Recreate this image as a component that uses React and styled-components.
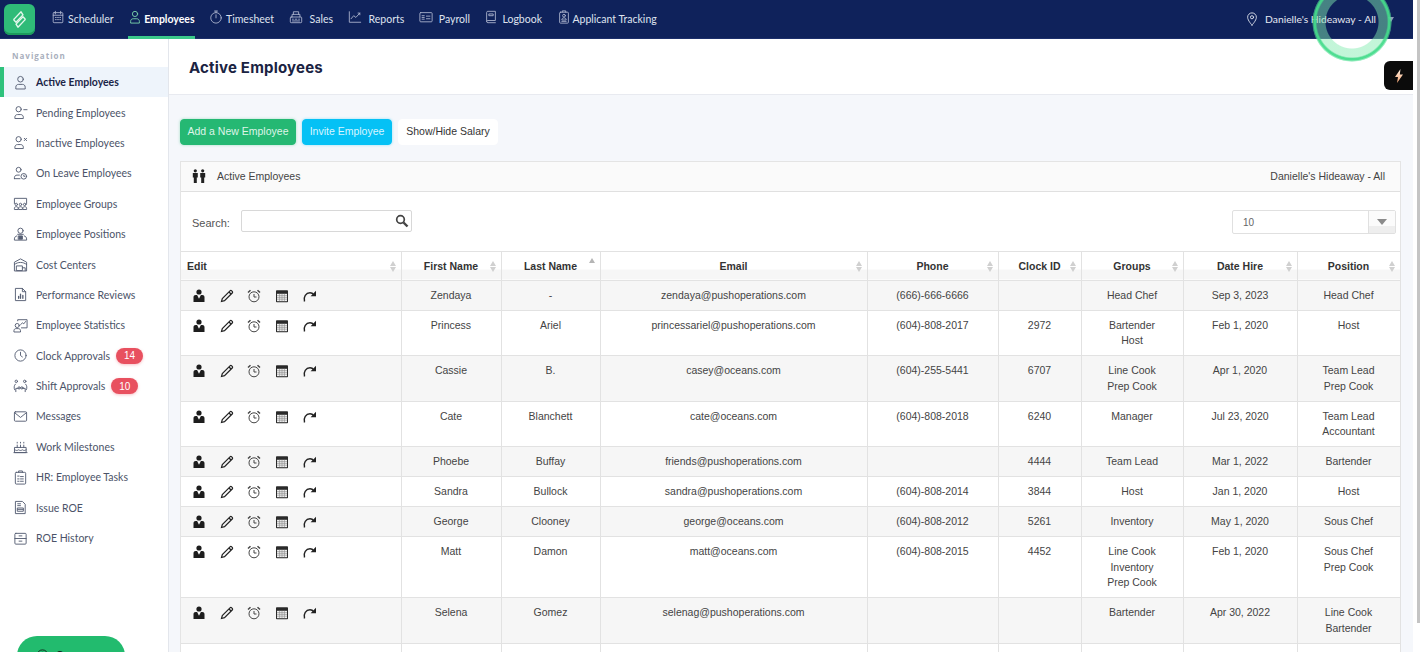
import React from "react";
import styled, { createGlobalStyle } from "styled-components";

const GlobalStyle = createGlobalStyle`
  html, body {
    margin: 0;
    height: 100%;
    overflow: hidden;
    background: #fff;
  }
  * { box-sizing: border-box; }
`;

const Page = styled.div`
  width: 1420px;
  height: 652px;
  display: flex;
  overflow: hidden;
  position: relative;
  font-family: "Liberation Sans", Arial, sans-serif;
`;

const Viewport = styled.div`
  width: 1413px;
  height: 652px;
  display: flex;
  flex-direction: column;
`;

const ScrollTrack = styled.div`
  width: 7px;
  background: #fff;
  padding-left: 4px;
`;

const ScrollThumb = styled.div`
  height: 623px;
  background: #c4c4c4;
`;

const TopBar = styled.header`
  height: 39px;
  flex: none;
  background: #0f225b;
  display: flex;
  align-items: center;
  padding-left: 4px;
  border-bottom: 1px solid #1c2f6b;
`;

const Logo = styled.div`
  width: 31px;
  height: 31px;
  border-radius: 6px;
  background: #2fbb78;
  box-shadow: inset 0 -2px 0 #1c9a5c;
  display: flex;
  align-items: center;
  justify-content: center;
  margin-right: 16px;
`;

const TopNav = styled.nav`
  display: flex;
  align-items: stretch;
  height: 39px;
  gap: 14.5px;
`;

const TopItem = styled.a`
  display: flex;
  align-items: center;
  gap: ${(p) => p.$gap}px;
  height: 39px;
  padding-top: 3px;
  font-family: Lato, sans-serif;
  font-size: 10.5px;
  font-weight: ${(p) => (p.$active ? 700 : 400)};
  color: ${(p) => (p.$active ? "#fff" : "#dfe3ef")};
  border-bottom: 3px solid ${(p) => (p.$active ? "#3bc98a" : "transparent")};
  svg {
    color: ${(p) => (p.$active ? "#7edcae" : "#aeb6cf")};
    margin-top: -4px;
  }
`;

const Location = styled.div`
  margin-left: auto;
  display: flex;
  align-items: center;
  gap: 6px;
  font-family: Lato, sans-serif;
  font-size: 10.3px;
  color: #e6e9f2;
  padding-right: 19px;
`;

const Caret = styled.span`
  width: 0;
  height: 0;
  margin-left: 6px;
  border-left: 3.5px solid transparent;
  border-right: 3.5px solid transparent;
  border-top: 5px solid #8d99bb;
`;

const Ring = styled.div`
  position: absolute;
  left: 1312px;
  top: -18px;
  width: 80px;
  height: 80px;
  border-radius: 50%;
  pointer-events: none;
  background: radial-gradient(
    circle closest-side,
    transparent 0 26px,
    rgba(130, 235, 175, 0.48) 27px 35px,
    rgba(70, 220, 140, 0.95) 36.5px 38px,
    rgba(90, 225, 155, 0.4) 39.5px,
    transparent 40px
  );
`;

const BoltTab = styled.div`
  position: absolute;
  left: 1384px;
  top: 61px;
  width: 29px;
  height: 29px;
  background: #0b0b0b;
  border-radius: 6px 0 0 6px;
  display: flex;
  align-items: center;
  justify-content: center;
`;

const SupportButton = styled.div`
  position: absolute;
  left: 17px;
  top: 636px;
  width: 108px;
  height: 40px;
  border-radius: 20px;
  background: #22bb6e;
  color: #10281c;
  display: flex;
  align-items: flex-start;
  gap: 6px;
  padding: 12px 0 0 18px;
  font-family: Lato, sans-serif;
  font-size: 13px;
  font-weight: 700;
`;

const Body = styled.div`
  flex: 1;
  min-height: 0;
  display: flex;
`;

const Sidebar = styled.aside`
  width: 169px;
  flex: none;
  background: #fff;
  border-right: 1px solid #e3e6ec;
  padding-top: 11px;
`;

const SideLabel = styled.div`
  height: 17px;
  padding-left: 12px;
  font-family: "Open Sans", sans-serif;
  font-size: 8px;
  font-weight: 700;
  letter-spacing: 1px;
  color: #a9afbd;
`;

const SideItem = styled.a`
  height: 30.4px;
  display: flex;
  align-items: center;
  padding-left: 12px;
  font-family: Lato, sans-serif;
  font-size: 10.5px;
  font-weight: ${(p) => (p.$active ? 700 : 400)};
  color: ${(p) => (p.$active ? "#1b2547" : "#4b5368")};
  background: ${(p) => (p.$active ? "#eef4fb" : "transparent")};
  box-shadow: ${(p) => (p.$active ? "inset 4px 0 0 #2fc27c" : "none")};
`;

const SideIcon = styled.span`
  width: 16px;
  margin-right: 8px;
  display: flex;
  justify-content: center;
  color: #555e73;
`;

const Badge = styled.span`
  margin-left: 6px;
  height: 16px;
  width: 27px;
  border-radius: 8px;
  background: #e8505f;
  color: #fff;
  font-family: "Liberation Sans", Arial, sans-serif;
  font-size: 10px;
  font-weight: 400;
  display: flex;
  align-items: center;
  justify-content: center;
  box-shadow: 0 1px 3px rgba(232, 80, 95, 0.35);
`;

const Main = styled.main`
  flex: 1;
  min-width: 0;
  background: #f5f7fb;
`;

const PageHead = styled.div`
  height: 56px;
  background: #fff;
  border-bottom: 1px solid #e8eaf0;
  display: flex;
  align-items: center;
  padding: 2px 0 0 20px;
  font-family: Inter, sans-serif;
  font-size: 15px;
  font-weight: 700;
  color: #1a2342;
  letter-spacing: 0.2px;
`;

const Content = styled.div`
  padding: 24px 12px 0 11px;
`;

const Actions = styled.div`
  display: flex;
  gap: 6px;
  margin-bottom: 16px;
`;

const ActionButton = styled.button`
  height: 26px;
  width: ${(p) => p.$w}px;
  border: 1px solid ${(p) => p.$bg};
  border-radius: 4px;
  background: ${(p) => p.$bg};
  color: ${(p) => p.$fg};
  font-family: "Liberation Sans", Arial, sans-serif;
  font-size: 10.5px;
  padding: 0 0 2px;
  box-shadow: ${(p) => p.$glow};
`;

const Panel = styled.section`
  background: #fff;
  border: 1px solid #e4e4e4;
`;

const PanelHead = styled.div`
  height: 30px;
  display: flex;
  align-items: center;
  justify-content: space-between;
  padding: 0 15px 2px 11px;
  font-size: 10.5px;
  color: #444;
  border-bottom: 1px solid #e0e0e0;
  background-color: #fafafa;
  background-image: radial-gradient(#e9e9e9 0.6px, transparent 0.7px);
  background-size: 4px 4px;
`;

const PanelTitle = styled.div`
  display: flex;
  align-items: center;
  gap: 11px;
`;

const FilterRow = styled.div`
  height: 58.5px;
  display: flex;
  align-items: center;
  justify-content: space-between;
  padding: 0 4px 0 11px;
  font-size: 11px;
  color: #555;
`;

const SearchLabel = styled.label`
  display: flex;
  align-items: center;
  gap: 11px;
  margin-top: -1px;
  span {
    padding-top: 4px;
  }
`;

const SearchBox = styled.div`
  width: 171px;
  height: 22px;
  border: 1px solid #d8d8d8;
  border-radius: 2px;
  display: flex;
  align-items: center;
  justify-content: flex-end;
  padding-right: 2px;
`;

const PageSize = styled.div`
  width: 164px;
  height: 24px;
  border: 1px solid #e0e0e0;
  border-radius: 2px;
  display: flex;
  font-size: 10px;
  color: #666;
  margin-top: 2px;
`;

const PageSizeValue = styled.div`
  flex: 1;
  display: flex;
  align-items: center;
  padding-left: 10px;
`;

const PageSizeArrow = styled.div`
  width: 27px;
  border-left: 1px solid #e0e0e0;
  background: linear-gradient(#fbfbfb 70%, #eee 70%);
  display: flex;
  align-items: center;
  justify-content: center;
  &::after {
    content: "";
    border-left: 5px solid transparent;
    border-right: 5px solid transparent;
    border-top: 6px solid #8a8a8a;
  }
`;

const Table = styled.table`
  width: 1219px;
  table-layout: fixed;
  border-collapse: collapse;
  font-size: 10.5px;
  color: #444;
`;

const Th = styled.th`
  height: 29px;
  position: relative;
  padding: 0 4px;
  border: 1px solid #e2e2e2;
  font-weight: 700;
  color: #333;
  text-align: ${(p) => (p.$left ? "left" : "center")};
  padding-left: ${(p) => (p.$left ? "6px" : "4px")};
  background: linear-gradient(#fff 64%, #f6f6f6 64%);
  &:first-child {
    border-left: none;
  }
`;

const SortMark = styled.span`
  position: absolute;
  right: 5px;
  top: 9px;
  display: flex;
  flex-direction: column;
  gap: 1px;
  &::before {
    content: "";
    border-left: 3px solid transparent;
    border-right: 3px solid transparent;
    border-bottom: 5px solid ${(p) => (p.$asc ? "#b5b5b5" : "#d0d0d0")};
    margin-top: ${(p) => (p.$asc ? "-3px" : "0")};
  }
  &::after {
    content: "";
    border-left: 3px solid transparent;
    border-right: 3px solid transparent;
    border-top: 5px solid ${(p) => (p.$asc ? "transparent" : "#d0d0d0")};
  }
`;

const Tr = styled.tr`
  background: ${(p) => (p.$odd ? "#f6f6f6" : "#fff")};
`;

const Td = styled.td`
  padding: 7px 4px 6.5px;
  border: 1px solid #e2e2e2;
  text-align: center;
  vertical-align: top;
  line-height: 15.5px;
  &:first-child {
    border-left: none;
  }
`;

const EditCell = styled(Td)`
  padding: 7px 0 0 11px;
`;

const EditIcons = styled.div`
  display: flex;
  gap: 13.5px;
  height: 16px;
  align-items: center;
  color: #222;
`;

const Line = styled.div``;

// line icon shorthand, 16 unit box, stroke follows the text colour
const Glyph = ({ children, size = 15 }) => (
  <svg
    width={size}
    height={size}
    viewBox="0 0 16 16"
    fill="none"
    stroke="currentColor"
    strokeWidth="1"
    strokeLinecap="round"
    strokeLinejoin="round"
  >
    {children}
  </svg>
);

const personBody = "M2 14v-1c0-1.600 1.200-2.800 2.800-2.800h3.400c1.600 0 2.800 1.200 2.800 2.800v1z";

const icons = {
  scheduler: (
    <>
      <rect x="2.500" y="3" width="11" height="11.500" rx="1" />
      <path d="M5 1.500v3M11 1.500v3M2.500 6h11M5 8.500h1M7.500 8.500h1M10 8.500h1M5 11h1M7.500 11h1M10 11h1" />
    </>
  ),
  person: (
    <>
      <circle cx="8" cy="4.500" r="3" />
      <path d="M3 14.500v-1.500c0-1.800 1.200-3 3-3h4c1.800 0 3 1.200 3 3v1.500z" />
    </>
  ),
  stopwatch: (
    <>
      <circle cx="8" cy="9" r="6" />
      <path d="M8 3V1.200M6.300 1.200h3.400M8 5.500V9" />
    </>
  ),
  register: (
    <>
      <rect x="1.500" y="8" width="13" height="6.500" rx="1" />
      <path d="M3.500 8V5h9v3M5 5V2h6v3M4 10.500h1M7 10.500h2M11 10.500h1M4 12.500h8" />
    </>
  ),
  chart: (
    <>
      <path d="M1.500 2v12h13" />
      <path d="M3.500 10l3-3.500 2.500 2 4.500-5" />
      <path d="M11.500 3.500h2v2" />
    </>
  ),
  payroll: (
    <>
      <rect x="1" y="3" width="14" height="10.500" rx="1" />
      <path d="M3.500 6.500h2.500M3.500 8.500h2.500M3.500 10.500h2.500M8.500 7h4M8.500 10h4" />
    </>
  ),
  book: (
    <>
      <path d="M3 13V2.800c0-.7.500-1.300 1.300-1.300H13v10.500H4.500C3.700 12 3 12.500 3 13.300s.7 1.200 1.500 1.200H13" />
      <path d="M6 4.500h4.500v2H6z" />
    </>
  ),
  clipboardPerson: (
    <>
      <rect x="3" y="2.500" width="10" height="12.500" rx="1" />
      <path d="M6 2.500V1h4v1.500" />
      <circle cx="8" cy="6.500" r="1.600" />
      <path d="M5.500 11c0-1.300 1-2 2.500-2s2.500.7 2.500 2zM5.500 13h5" />
    </>
  ),
  pin: (
    <>
      <path d="M8 15S3 9.800 3 6a5 5 0 0 1 10 0c0 3.800-5 9-5 9z" />
      <circle cx="8" cy="6" r="1.800" />
    </>
  ),
  minus: (
    <>
      <circle cx="6" cy="4.500" r="2.800" />
      <path d={personBody} />
      <path d="M11.500 5h3.500" />
    </>
  ),
  cross: (
    <>
      <circle cx="6" cy="4.500" r="2.800" />
      <path d={personBody} />
      <path d="M12 3.500l2.500 2.500M14.500 3.500L12 6" />
    </>
  ),
  leave: (
    <>
      <circle cx="6" cy="4" r="2.600" />
      <path d="M1.500 13.500v-1c0-1.600 1.200-2.800 2.800-2.800h2.500" />
      <path d="M1.500 13.500h6" />
      <circle cx="11.500" cy="11" r="3" />
      <path d="M11.500 9.800V11h1.200" />
    </>
  ),
  groups: (
    <>
      <path d="M1.500 8V2.500h13V8" />
      <circle cx="3.500" cy="9" r="1.300" />
      <circle cx="8" cy="9" r="1.300" />
      <circle cx="12.500" cy="9" r="1.300" />
      <path d="M1.500 14v-1c0-1 .8-1.600 2-1.600s2 .6 2 1.600v1zM6 14v-1c0-1 .8-1.600 2-1.600s2 .6 2 1.600v1zM10.500 14v-1c0-1 .8-1.600 2-1.600s2 .6 2 1.600v1z" />
    </>
  ),
  positions: (
    <>
      <circle cx="8" cy="4" r="2.800" />
      <path d="M5 7.800h6M4 9.500c-1.500.4-2.500 1.500-2.500 3.200V14h13v-1.300c0-1.700-1-2.800-2.500-3.200" />
      <rect x="6" y="9.500" width="4" height="3.500" fill="currentColor" />
    </>
  ),
  warehouse: (
    <>
      <path d="M1.500 14.500V5.500L8 2l6.500 3.500v9z" />
      <path d="M1.500 8c2-1.500 4-2.200 6.500-2.200S12.500 6.500 14.500 8" />
      <rect x="4" y="9.500" width="6" height="5" />
      <path d="M10 11.500h3v3" />
    </>
  ),
  review: (
    <>
      <path d="M3 1.500h7l3.500 3.500v9.500H3z" />
      <path d="M10 1.500V5h3.500" />
      <path d="M6 12V10M8 12V7.500M10.500 12V9" strokeWidth="1.400" />
    </>
  ),
  stats: (
    <>
      <path d="M5 3V1.800h10v8.700H9" />
      <path d="M8 7.200l2-2 1.500 1 2-2.500" />
      <circle cx="4.500" cy="8" r="2.200" />
      <path d="M1 14.500v-1c0-1.300 1-2.200 2.300-2.200h2.400c1.300 0 2.300.9 2.300 2.200v1z" />
    </>
  ),
  clock: (
    <>
      <circle cx="8" cy="8" r="6" />
      <path d="M8 4.500V8l2 1.500" />
    </>
  ),
  handshake: (
    <>
      <circle cx="3.500" cy="2.500" r="1.300" />
      <circle cx="12.500" cy="2.500" r="1.300" />
      <path d="M2.500 5.500C1 7 .8 9.500 1.800 11.500M3 13.500V10h2.500M13.500 5.500c1.500 1.500 1.700 4 .7 6M13 13.500V10h-2.500" />
      <circle cx="6.500" cy="9.500" r="1.200" />
      <circle cx="9.500" cy="9.500" r="1.200" />
    </>
  ),
  mail: (
    <>
      <rect x="1.500" y="3" width="13" height="10" rx="1" />
      <path d="M1.800 4l6.200 5 6.200-5" />
    </>
  ),
  cake: (
    <>
      <path d="M2 9h12v5.500H2z" />
      <path d="M2 11.500c1.500 1 2.500 1 4 0 1.500 1 2.500 1 4 0 1.500 1 2.500 1 4 0" />
      <path d="M4.500 9V6.500M8 9V6.500M11.500 9V6.500M4.500 3.500v.8M8 3.500v.8M11.500 3.500v.8M1 14.500h14" />
    </>
  ),
  tasks: (
    <>
      <rect x="2.500" y="2.500" width="11" height="12.500" rx="1" />
      <path d="M6 2.500V1h4v1.500M5 6.500h1.500M5 9.500h1.500M5 12h1.500M8 7h3M8 9.500h3M8 12h3" />
    </>
  ),
  roe: (
    <>
      <path d="M3 1.500h7l3 3v10H3z" />
      <path d="M5 4h3M5 6h3M5 8.500h6v3.500H5zM5 10h6" />
    </>
  ),
  history: (
    <>
      <rect x="2" y="2.500" width="12" height="11.500" rx="1" />
      <path d="M2 8h12M6.500 5.200h3M6.500 10.800h3" />
    </>
  ),
};

const PersonTie = () => (
  <svg width="14" height="14" viewBox="0 0 14 14" fill="#1d1d1d">
    <circle cx="7" cy="3" r="2.600" />
    <path d="M1.500 13V8.200c0-1.300.9-2.200 2.200-2.200h1.400L7 9.800 8.900 6h1.400c1.300 0 2.200.9 2.200 2.200V13z" />
  </svg>
);

const Pencil = () => (
  <svg width="14" height="14" viewBox="0 0 14 14" fill="none" stroke="#222" strokeWidth="1.200">
    <path d="M1.500 12.500l.8-3L10 1.800c.5-.5 1.200-.5 1.700 0l.5.5c.5.5.5 1.200 0 1.700L4.500 11.700z" />
    <path d="M9 3l2 2" />
  </svg>
);

const Alarm = () => (
  <svg width="14" height="14" viewBox="0 0 14 14" fill="none" stroke="#444" strokeWidth="1">
    <circle cx="7" cy="7.800" r="5" />
    <path d="M7 5v3h2.500" />
    <path d="M1 3.500L3.500 1.200M13 3.500L10.500 1.200" strokeWidth="1.500" />
  </svg>
);

const CalendarGrid = () => (
  <svg width="14" height="14" viewBox="0 0 14 14">
    <rect x="1" y="1.200" width="12" height="12" fill="#2a2a2a" rx="0.800" />
    <rect x="2" y="4.800" width="10" height="7.400" fill="#f0f0f0" />
    <path d="M2 6.600h10M2 8.400h10M2 10.200h10M4.600 4.800v7.400M7 4.800v7.400M9.400 4.800v7.400" stroke="#888" strokeWidth="0.600" />
  </svg>
);

const RedoArrow = () => (
  <svg width="15" height="14" viewBox="0 0 15 14" fill="none" stroke="#222" strokeWidth="1.400">
    <path d="M2.500 12.500C1.200 8 4 3.800 8 3.800c1.800 0 3 .8 3.900 2" />
    <path d="M14 1.800v5.400H8.600z" fill="#222" stroke="none" />
  </svg>
);

const LogoMark = () => (
  <svg width="17" height="19" viewBox="0 0 22 24" fill="none" stroke="#e4f7ec" strokeWidth="1.800" strokeLinejoin="round">
    <path d="M13 2L4 11.500c-.4.400-.4 1 0 1.400l2.500 2.600 9-9.500z" />
    <path d="M9 22l9-9.500c.4-.4.400-1 0-1.400l-2.500-2.600-9 9.500z" />
  </svg>
);

const Couple = () => (
  <svg width="14" height="14" viewBox="0 0 14 14" fill="#222">
    <circle cx="3.300" cy="1.800" r="1.600" />
    <circle cx="10.700" cy="1.800" r="1.600" />
    <path d="M.8 4h5v4.500H4.800V14H1.800V8.500H.8zM8.200 4h5v4.500h-1V14H9.200V8.500h-1z" />
  </svg>
);

const Magnifier = () => (
  <svg width="14" height="14" viewBox="0 0 14 14" fill="none" stroke="#444">
    <circle cx="5.500" cy="5.500" r="3.800" strokeWidth="1.700" />
    <path d="M8.500 8.500l4 4" strokeWidth="2.400" />
  </svg>
);

const Bolt = () => (
  <svg width="10" height="14" viewBox="0 0 10 14">
    <defs>
      <linearGradient id="boltFill" x1="0" y1="0" x2="0" y2="1">
        <stop offset="0" stopColor="#fff4e6" />
        <stop offset="1" stopColor="#f5a26f" />
      </linearGradient>
    </defs>
    <path d="M6.500 0L1 8h3L3 14l6-8.500H5.800z" fill="url(#boltFill)" />
  </svg>
);

const topItems = [
  ["Scheduler", "scheduler", 3],
  ["Employees", "person", 2, true],
  ["Timesheet", "stopwatch", 3],
  ["Sales", "register", 7],
  ["Reports", "chart", 7],
  ["Payroll", "payroll", 6],
  ["Logbook", "book", 4],
  ["Applicant Tracking", "clipboardPerson", 2],
];

const sideItems = [
  ["Active Employees", "person", null, true],
  ["Pending Employees", "minus"],
  ["Inactive Employees", "cross"],
  ["On Leave Employees", "leave"],
  ["Employee Groups", "groups"],
  ["Employee Positions", "positions"],
  ["Cost Centers", "warehouse"],
  ["Performance Reviews", "review"],
  ["Employee Statistics", "stats"],
  ["Clock Approvals", "clock", 14],
  ["Shift Approvals", "handshake", 10],
  ["Messages", "mail"],
  ["Work Milestones", "cake"],
  ["HR: Employee Tasks", "tasks"],
  ["Issue ROE", "roe"],
  ["ROE History", "history"],
];

const columns = [
  ["Edit", 220],
  ["First Name", 100],
  ["Last Name", 99],
  ["Email", 267],
  ["Phone", 131],
  ["Clock ID", 83],
  ["Groups", 102],
  ["Date Hire", 114],
  ["Position", 103],
];

const employees = [
  ["Zendaya", "-", "zendaya@pushoperations.com", "(666)-666-6666", "", ["Head Chef"], "Sep 3, 2023", ["Head Chef"]],
  ["Princess", "Ariel", "princessariel@pushoperations.com", "(604)-808-2017", "2972", ["Bartender", "Host"], "Feb 1, 2020", ["Host"]],
  ["Cassie", "B.", "casey@oceans.com", "(604)-255-5441", "6707", ["Line Cook", "Prep Cook"], "Apr 1, 2020", ["Team Lead", "Prep Cook"]],
  ["Cate", "Blanchett", "cate@oceans.com", "(604)-808-2018", "6240", ["Manager"], "Jul 23, 2020", ["Team Lead", "Accountant"]],
  ["Phoebe", "Buffay", "friends@pushoperations.com", "", "4444", ["Team Lead"], "Mar 1, 2022", ["Bartender"]],
  ["Sandra", "Bullock", "sandra@pushoperations.com", "(604)-808-2014", "3844", ["Host"], "Jan 1, 2020", ["Host"]],
  ["George", "Clooney", "george@oceans.com", "(604)-808-2012", "5261", ["Inventory"], "May 1, 2020", ["Sous Chef"]],
  ["Matt", "Damon", "matt@oceans.com", "(604)-808-2015", "4452", ["Line Cook", "Inventory", "Prep Cook"], "Feb 1, 2020", ["Sous Chef", "Prep Cook"]],
  ["Selena", "Gomez", "selenag@pushoperations.com", "", "", ["Bartender"], "Apr 30, 2022", ["Line Cook", "Bartender"]],
];

const Lines = ({ items }) => items.map((text) => <Line key={text}>{text}</Line>);

export default function App() {
  return (
    <Page>
      <GlobalStyle />
      <Viewport>
        <TopBar>
          <Logo>
            <LogoMark />
          </Logo>
          <TopNav>
            {topItems.map(([label, icon, gap, active]) => (
              <TopItem key={label} $gap={gap} $active={active}>
                <Glyph size={14}>{icons[icon]}</Glyph>
                {label}
              </TopItem>
            ))}
          </TopNav>
          <Location>
            <Glyph size={14}>{icons.pin}</Glyph>
            Danielle's Hideaway - All
            <Caret />
          </Location>
        </TopBar>
        <Body>
          <Sidebar>
            <SideLabel>Navigation</SideLabel>
            {sideItems.map(([label, icon, badge, active]) => (
              <SideItem key={label} $active={active}>
                <SideIcon>
                  <Glyph>{icons[icon]}</Glyph>
                </SideIcon>
                {label}
                {badge && <Badge>{badge}</Badge>}
              </SideItem>
            ))}
          </Sidebar>
          <Main>
            <PageHead>Active Employees</PageHead>
            <Content>
              <Actions>
                <ActionButton $w={116} $bg="#25b873" $fg="#dff5e9" $glow="0 0 3px rgba(37,184,115,0.4)">
                  Add a New Employee
                </ActionButton>
                <ActionButton $w={90} $bg="#05c1f5" $fg="#d8f5ff" $glow="0 0 3px rgba(5,193,245,0.4)">
                  Invite Employee
                </ActionButton>
                <ActionButton $w={100} $bg="#fff" $fg="#333" $glow="none">
                  Show/Hide Salary
                </ActionButton>
              </Actions>
              <Panel>
                <PanelHead>
                  <PanelTitle>
                    <Couple />
                    Active Employees
                  </PanelTitle>
                  Danielle's Hideaway - All
                </PanelHead>
                <FilterRow>
                  <SearchLabel>
                    <span>Search:</span>
                    <SearchBox>
                      <Magnifier />
                    </SearchBox>
                  </SearchLabel>
                  <PageSize>
                    <PageSizeValue>10</PageSizeValue>
                    <PageSizeArrow />
                  </PageSize>
                </FilterRow>
                <Table>
                  <colgroup>
                    {columns.map(([label, width]) => (
                      <col key={label} width={width} />
                    ))}
                  </colgroup>
                  <thead>
                    <tr>
                      {columns.map(([label], i) => (
                        <Th key={label} $left={i === 0}>
                          {label}
                          <SortMark $asc={label === "Last Name"} />
                        </Th>
                      ))}
                    </tr>
                  </thead>
                  <tbody>
                    {employees.map((row, i) => (
                      <Tr key={row[0]} $odd={i % 2 === 0}>
                        <EditCell>
                          <EditIcons>
                            <PersonTie />
                            <Pencil />
                            <Alarm />
                            <CalendarGrid />
                            <RedoArrow />
                          </EditIcons>
                        </EditCell>
                        <Td>{row[0]}</Td>
                        <Td>{row[1]}</Td>
                        <Td>{row[2]}</Td>
                        <Td>{row[3]}</Td>
                        <Td>{row[4]}</Td>
                        <Td>
                          <Lines items={row[5]} />
                        </Td>
                        <Td>{row[6]}</Td>
                        <Td>
                          <Lines items={row[7]} />
                        </Td>
                      </Tr>
                    ))}
                    <Tr>
                      {columns.map(([label]) => (
                        <Td key={label}>&nbsp;</Td>
                      ))}
                    </Tr>
                  </tbody>
                </Table>
              </Panel>
            </Content>
          </Main>
        </Body>
      </Viewport>
      <ScrollTrack>
        <ScrollThumb />
      </ScrollTrack>
      <Ring />
      <BoltTab>
        <Bolt />
      </BoltTab>
      <SupportButton>
        <Glyph size={15}>{icons.clock}</Glyph>
        Support
      </SupportButton>
    </Page>
  );
}
